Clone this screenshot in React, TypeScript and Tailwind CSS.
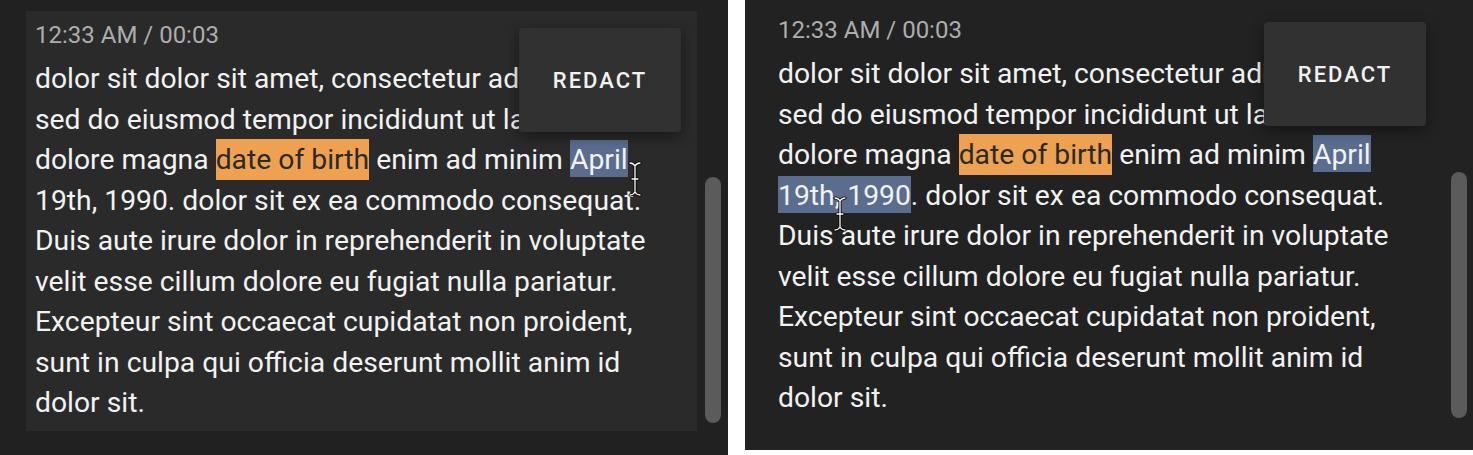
import React from "react";

function Cursor({ className }: { className: string }) {
  return (
    <svg className={className} width="14" height="36" viewBox="0 0 14 36" fill="none">
      <path
        d="M2 2 Q5 2 7 5 Q9 2 12 2 M7 5 V31 M2 34 Q5 34 7 31 Q9 34 12 34 M4 18 H10"
        stroke="#000"
        strokeWidth="3"
        strokeLinecap="round"
      />
      <path
        d="M2 2 Q5 2 7 5 Q9 2 12 2 M7 5 V31 M2 34 Q5 34 7 31 Q9 34 12 34 M4 18 H10"
        stroke="#fff"
        strokeWidth="1.3"
        strokeLinecap="round"
      />
    </svg>
  );
}

function Transcript({ wide }: { wide: boolean }) {
  return (
    <div className="text-[28.3px] leading-[40.5px] text-[#f2f2f2] whitespace-nowrap">
      <div>dolor sit dolor sit amet, consectetur adipiscing elit,</div>
      <div>sed do eiusmod tempor incididunt ut labore et</div>
      <div>
        dolore magna{" "}
        <span className="bg-[#efa152] text-[#2a2a2a] py-[3.7px]">date of birth</span> enim ad minim{" "}
        <span className="bg-[#5a6d8f] pt-[3px] pb-[1px]">April</span>
      </div>
      <div>
        {wide ? (
          <>
            <span className="bg-[#5a6d8f] pt-[3px] pb-[1px]">19th, 1990</span>. dolor sit ex ea commodo consequat.
          </>
        ) : (
          "19th, 1990. dolor sit ex ea commodo consequat."
        )}
      </div>
      <div>Duis aute irure dolor in reprehenderit in voluptate</div>
      <div>velit esse cillum dolore eu fugiat nulla pariatur.</div>
      <div>Excepteur sint occaecat cupidatat non proident,</div>
      <div>sunt in culpa qui officia deserunt mollit anim id</div>
      <div>dolor sit.</div>
    </div>
  );
}

function RedactMenu({ top }: { top: string }) {
  return (
    <div
      className={`absolute ${top} left-[519px] w-[162px] h-[104px] rounded-[4px] bg-[#313131] shadow-[0_4px_14px_rgba(0,0,0,0.45)] flex items-center justify-center`}
    >
      <span className="text-[22px] font-medium tracking-[2px] text-[#f2f2f2]">REDACT</span>
    </div>
  );
}

export default function App() {
  return (
    <div className="flex bg-white w-[1473px] h-[455px] gap-[17px]" style={{ fontFamily: "Roboto, 'Noto Sans', sans-serif" }}>
      {/* before */}
      <div className="relative w-[728px] h-[455px] bg-[#212121] pt-[11px] pl-[26px]">
        <div className="w-[671px] h-[420px] bg-[#2a2a2a] pl-[9px] pt-[10px]">
          <div className="text-[24px] leading-[28px] text-[#adadad]">12:33 AM / 00:03</div>
          <div className="mt-[10px]">
            <Transcript wide={false} />
          </div>
        </div>
        <RedactMenu top="top-[28px]" />
        <Cursor className="absolute left-[628px] top-[161px]" />
        <div className="absolute left-[705px] top-[177px] w-[16px] h-[246px] rounded-full bg-[#5b5b5b]" />
      </div>

      {/* after */}
      <div className="relative w-[728px] h-[450px] bg-[#222222] pl-[33px] pt-[16px]">
        <div className="text-[24px] leading-[28px] text-[#adadad]">12:33 AM / 00:03</div>
        <div className="mt-[10px]">
          <Transcript wide={true} />
        </div>
        <RedactMenu top="top-[22px]" />
        <Cursor className="absolute left-[88px] top-[196px]" />
        <div className="absolute left-[706px] top-[172px] w-[16px] h-[246px] rounded-full bg-[#5b5b5b]" />
      </div>
    </div>
  );
}
